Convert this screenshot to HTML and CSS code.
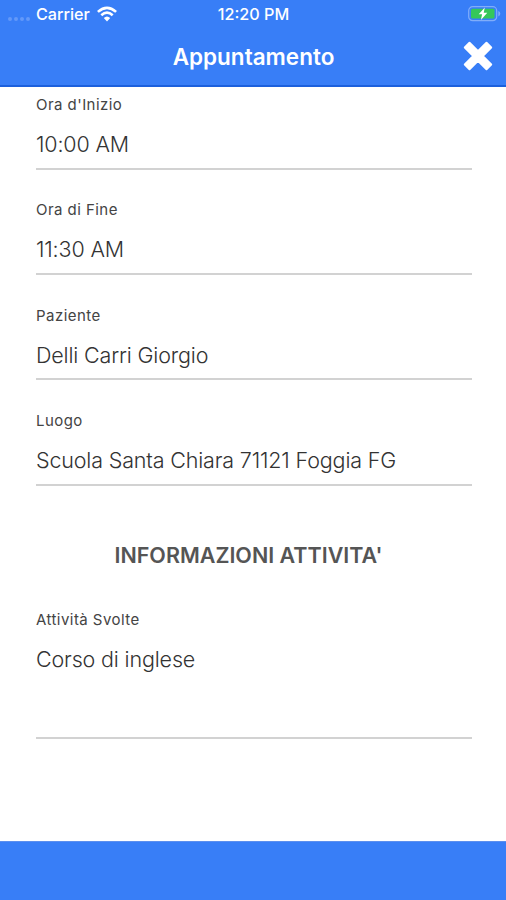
FILE: index.html
```html
<!DOCTYPE html>
<html lang="it">
<head>
<meta charset="utf-8">
<title>Appuntamento</title>
<link rel="stylesheet" href="styles.css">
</head>
<body>
<div class="screen">
  <header class="header">
    <div class="status">
      <div class="carrier">
        <span class="dots"><i></i><i></i><i></i><i></i></span>
        <span>Carrier</span>
        <svg class="wifi" width="20" height="16" viewBox="0 0 20 16" fill="none" stroke="#fff" stroke-width="2.6">
          <path d="M.9 5.9Q10-2.3 19.1 5.9M4.3 9.2Q10 4 15.7 9.2"/>
          <path d="M6.8 12Q10 9 13.2 12L10 15.4z" fill="#fff" stroke="none"/>
        </svg>
      </div>
      <span class="clock">12:20 PM</span>
      <svg class="battery" width="33" height="16" viewBox="0 0 33 16">
        <rect x=".7" y=".7" width="28" height="14" rx="4" fill="none" stroke="#80adfa" stroke-width="1.2"/>
        <rect x="3" y="2.8" width="23.5" height="9.8" rx="1.5" fill="#35c759"/>
        <path d="M30.3 5q2 .8 2 2.7t-2 2.7z" fill="#80adfa"/>
        <path d="M16.8 1.4L10.7 8.3h3.4l-1.2 5.6 6.4-7.1h-3.6z" fill="#fff"/>
      </svg>
    </div>
    <div class="titlebar">
      <h1>Appuntamento</h1>
      <svg class="close" width="30" height="30" viewBox="0 0 30 30" stroke="#fff" stroke-linejoin="round">
        <path d="M6.5 1.8L15 10.3l8.5-8.5 4.7 4.7L19.7 15l8.5 8.5-4.7 4.7L15 19.7l-8.5 8.5-4.7-4.7L10.3 15 1.8 6.5z" fill="#fff" stroke-width="2"/>
      </svg>
    </div>
  </header>
  <main class="form">
    <div class="field"><label>Ora d'Inizio</label><p>10:00 AM</p></div>
    <div class="field"><label>Ora di Fine</label><p>11:30 AM</p></div>
    <div class="field"><label>Paziente</label><p>Delli Carri Giorgio</p></div>
    <div class="field"><label>Luogo</label><p>Scuola Santa Chiara 71121 Foggia FG</p></div>
    <h2>INFORMAZIONI ATTIVITA'</h2>
    <div class="field area"><label>Attività Svolte</label><p>Corso di inglese</p></div>
  </main>
  <footer class="footer"></footer>
</div>
</body>
</html>
```
FILE: styles.css
```css
* { box-sizing: border-box; margin: 0; padding: 0; }
body { font-family: Inter, "Liberation Sans", sans-serif; background: #fff; }
.screen { width: 506px; height: 900px; display: flex; flex-direction: column; overflow: hidden; }
.header { height: 87px; flex: none; background: #387ef7; border-bottom: 2px solid #1c60dc; color: #fff; }
.status { height: 28px; display: grid; grid-template-columns: 1fr auto 1fr; align-items: center; padding: 0 7px 0 8px; font-size: 16.2px; font-weight: 500; }
.carrier { display: flex; align-items: center; }
.carrier .dots { display: flex; gap: 2px; margin: 9px 6px 0 0; }
.dots i { width: 4px; height: 4px; border-radius: 50%; background: #6399f9; }
.wifi { margin-left: 7px; }
.battery { justify-self: end; margin-right: -2px; }
.titlebar { height: 57px; display: grid; grid-template-columns: 30px 1fr 30px; align-items: center; padding: 0 13px 0 14px; }
h1 { grid-column: 2; text-align: center; font-size: 22.5px; font-weight: 600; line-height: 28px; }
.close { margin-top: -2px; }
.form { flex: 1; padding: 2px 34px 0 36px; }
.field { height: 105.4px; }
.field label { display: block; height: 30px; line-height: 32px; font-size: 15px; letter-spacing: .45px; color: #444; }
.field p { height: 50.5px; line-height: 50px; border-bottom: 2px solid #d2d2d2; font-size: 21.5px; font-weight: 300; letter-spacing: -.16px; color: #333; white-space: nowrap; }
h2 { margin: 29px 11px 34px 0; text-align: center; font-size: 21.5px; line-height: 30px; font-weight: 600; color: #555; }
.area p { height: 105px; }
.footer { height: 59px; flex: none; background: #387ef7; border-top: 1px solid #5c8fee; }
```
